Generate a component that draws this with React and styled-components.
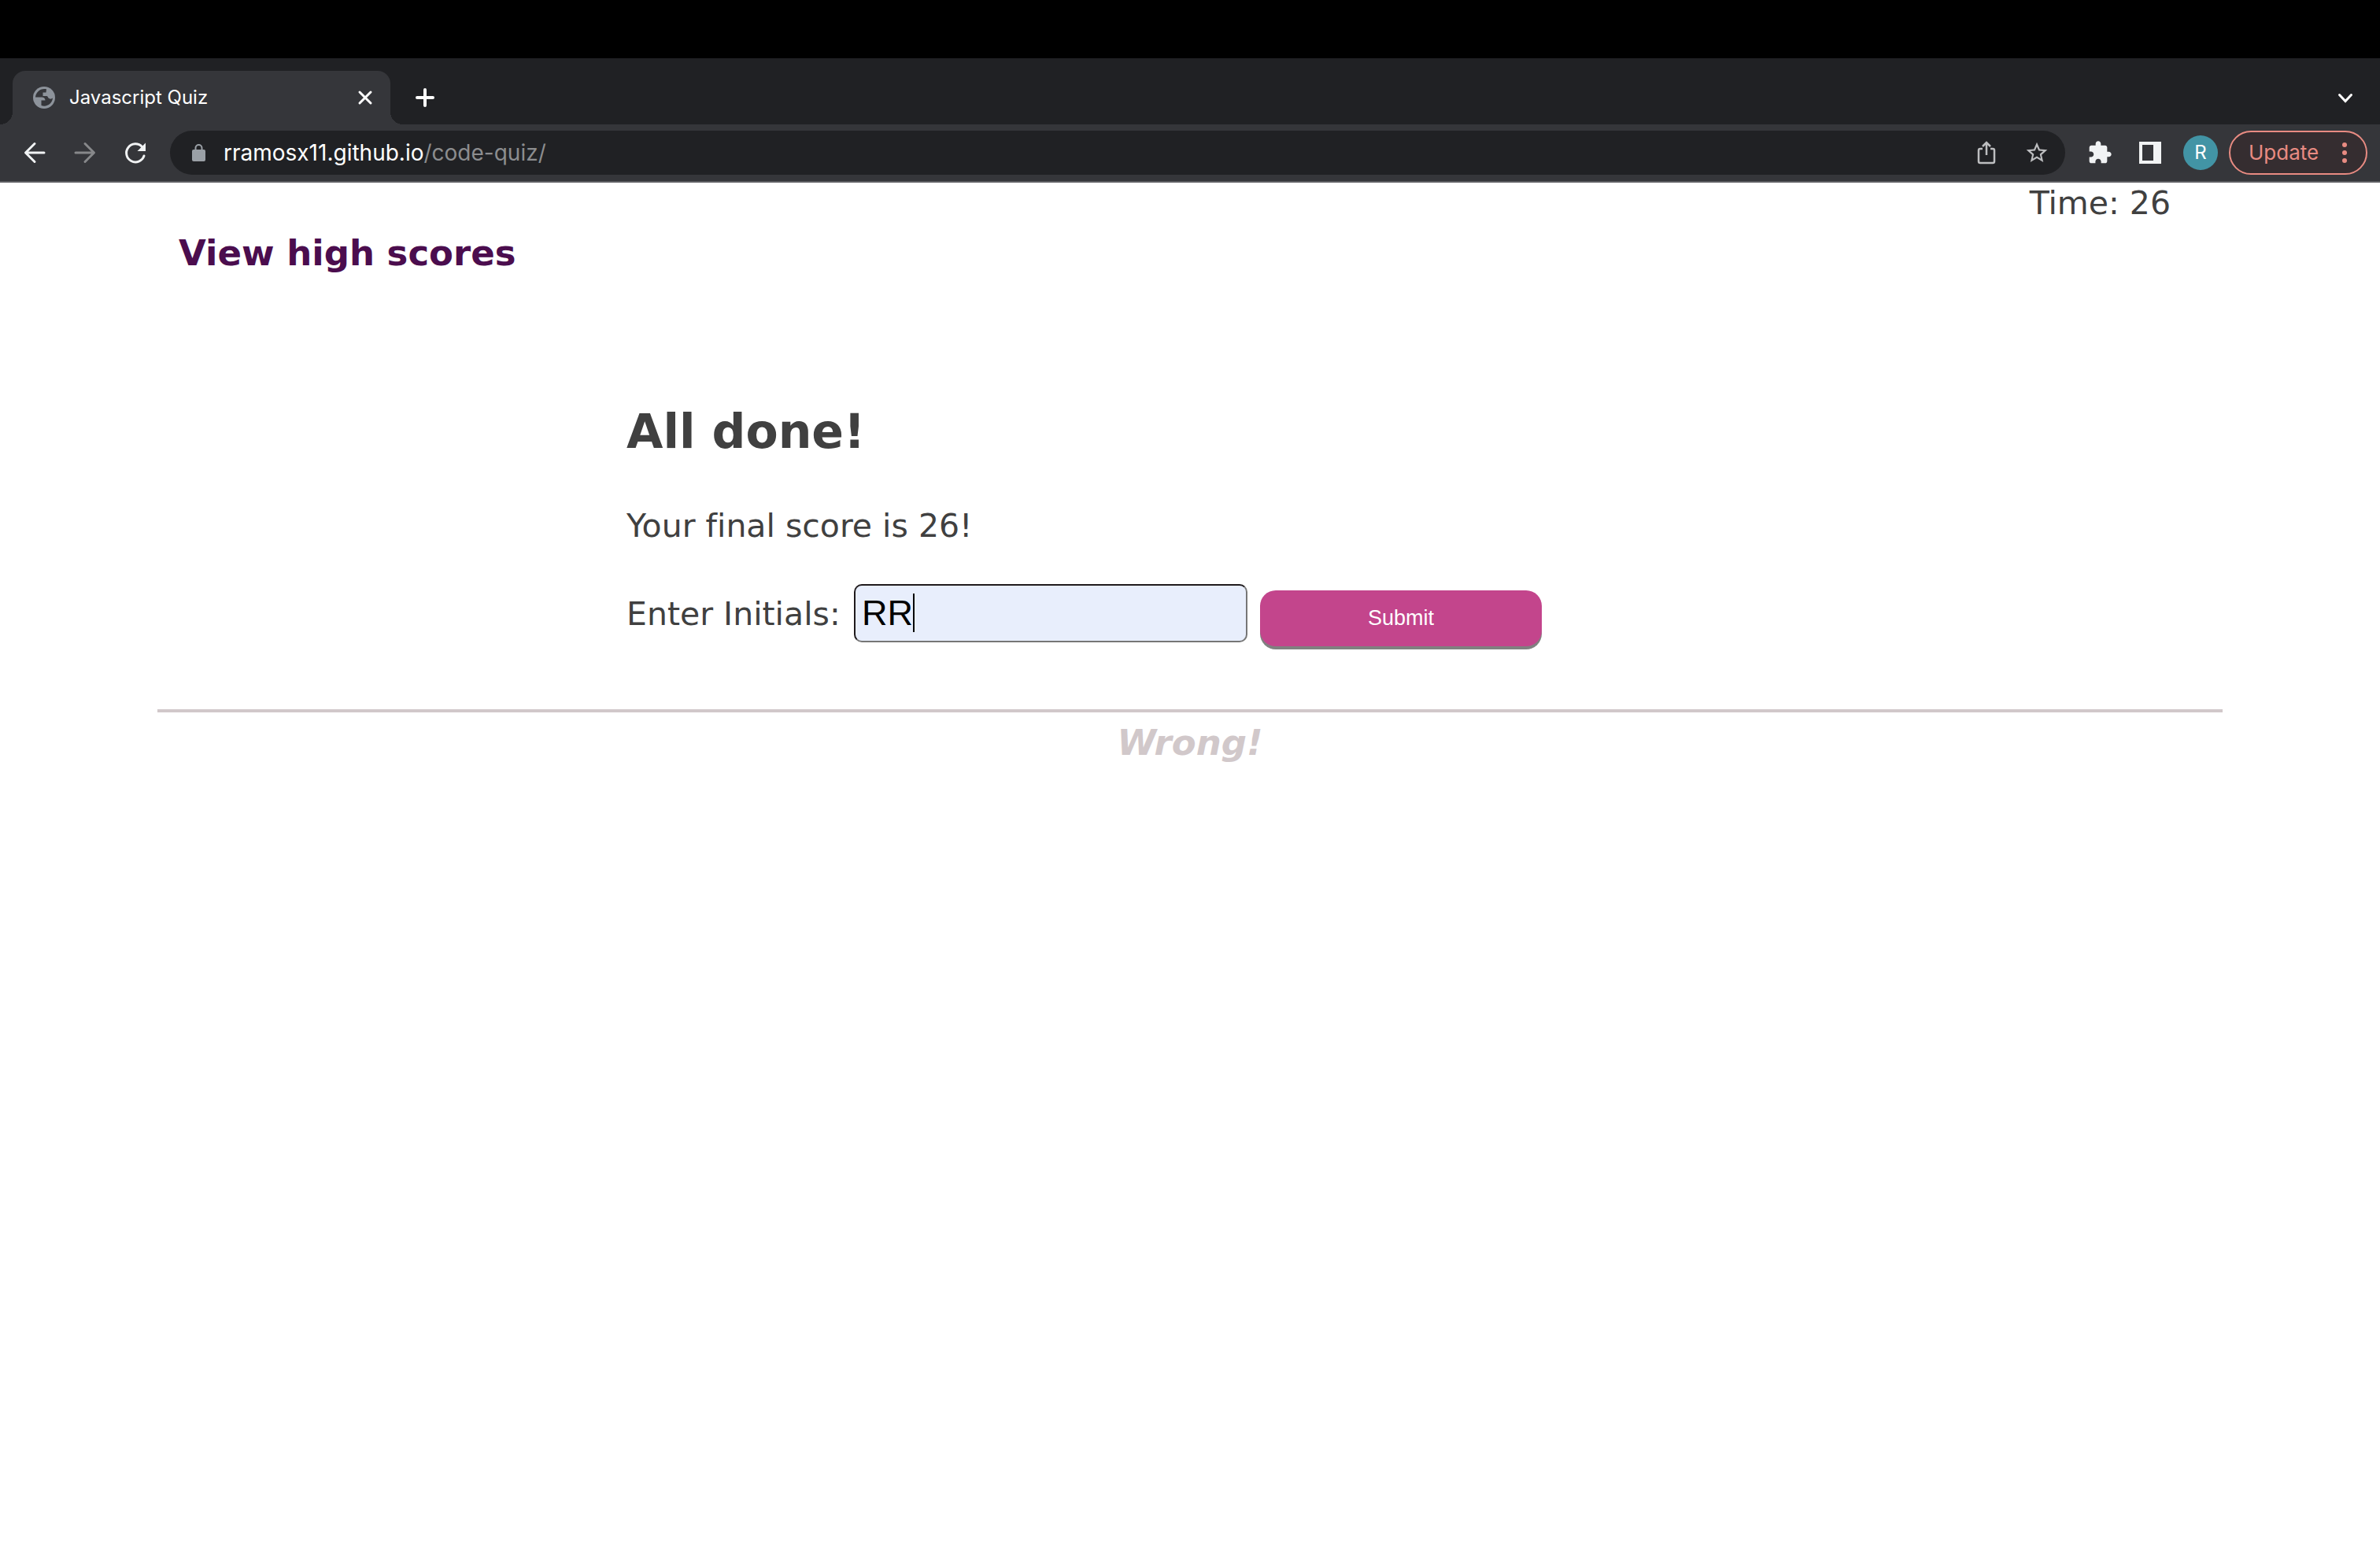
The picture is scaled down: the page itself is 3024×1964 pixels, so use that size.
import React, { useState } from "react";
import styled, { createGlobalStyle } from "styled-components";

const GlobalStyle = createGlobalStyle`
  *, *::before, *::after { box-sizing: border-box; }
  body {
    margin: 0;
    background: #fff;
    color: #404040;
    font-family: "DejaVu Sans", Verdana, sans-serif;
    font-size: 41px;
    line-height: 48px;
    font-variant-ligatures: none;
  }
  button, input { font: inherit; }
`;

const Chrome = styled.header`
  padding-top: 74px;
  background: #000;
  font-family: Inter, sans-serif;
  color: #fff;
`;

const TabStrip = styled.div`
  display: flex;
  align-items: flex-end;
  height: 84px;
  padding: 0 16px;
  background: #202124;
`;

const Tab = styled.div`
  position: relative;
  display: flex;
  align-items: center;
  gap: 18px;
  width: 480px;
  height: 68px;
  padding: 0 16px 0 26px;
  border-radius: 16px 16px 0 0;
  background: #35363a;

  &::before,
  &::after {
    content: "";
    position: absolute;
    bottom: 0;
    width: 16px;
    height: 16px;
  }
  &::before {
    left: -16px;
    background: radial-gradient(circle at 0 0, transparent 16px, #35363a 16px);
  }
  &::after {
    right: -16px;
    background: radial-gradient(circle at 100% 0, transparent 16px, #35363a 16px);
  }
`;

const TabTitle = styled.span`
  flex: 1;
  font-size: 24px;
  line-height: 32px;
`;

const IconButton = styled.button`
  display: flex;
  align-items: center;
  justify-content: center;
  flex: none;
  width: ${(p) => p.$size || 32}px;
  height: ${(p) => p.$size || 32}px;
  padding: 0;
  border: 0;
  background: none;
  color: ${(p) => p.$color || "#f1f3f4"};
`;

const StripButtons = styled.div`
  display: flex;
  flex: 1;
  align-items: center;
  justify-content: space-between;
  height: 68px;
  padding: 0 12px 0 28px;
`;

const Toolbar = styled.div`
  display: flex;
  align-items: center;
  height: 74px;
  padding: 0 16px 0 28px;
  border-bottom: 2px solid #5c5d61;
  background: #35363a;
`;

const NavButtons = styled.nav`
  display: flex;
  gap: 32px;
  margin-right: 28px;
`;

const AddressBar = styled.div`
  display: flex;
  flex: 1;
  align-items: center;
  height: 56px;
  padding: 0 20px 0 28px;
  border-radius: 28px;
  background: #202124;
`;

const Address = styled.div`
  flex: 1;
  margin-left: 23px;
  font-size: 28px;
  line-height: 36px;
`;

const AddressPath = styled.span`
  color: #8c8d8f;
`;

const AddressActions = styled.div`
  display: flex;
  gap: 32px;
`;

const ToolbarActions = styled.div`
  display: flex;
  align-items: center;
  gap: 32px;
  margin: 0 14px 0 28px;
`;

const Avatar = styled.button`
  width: 44px;
  height: 44px;
  margin-left: -6px;
  padding: 0;
  border: 0;
  border-radius: 50%;
  background: #4294a5;
  color: #fff;
  font-size: 24px;
  line-height: 44px;
`;

const UpdateButton = styled.button`
  display: flex;
  align-items: center;
  justify-content: space-between;
  width: 176px;
  height: 56px;
  padding: 0 23px;
  border: 2px solid #e88b82;
  border-radius: 28px;
  background: #352d30;
  color: #e88b82;
  font-size: 26px;
  line-height: 32px;
`;

const Page = styled.div`
  padding: 2px 200px 0;
`;

const Timer = styled.div`
  padding-right: 66px;
  text-align: right;
`;

const ScoresLink = styled.a`
  display: block;
  width: fit-content;
  margin: 12px 0 0 27px;
  color: #4b0d4e;
  font-size: 45px;
  font-weight: 700;
  line-height: 56px;
  text-decoration: none;
`;

const Result = styled.main`
  max-width: 1432px;
  margin: 162px auto 0;
`;

const Title = styled.h1`
  margin: 0 0 60px;
  font-size: 60px;
  line-height: 72px;
`;

const Score = styled.p`
  margin: 0 0 50px;
`;

const InitialsForm = styled.form`
  display: flex;
  align-items: flex-start;
  gap: 16px;
`;

const Label = styled.label`
  min-width: 273px;
  line-height: 76px;
`;

const Field = styled.div`
  position: relative;
  width: 500px;
`;

const Input = styled.input`
  display: block;
  width: 100%;
  height: 74px;
  padding: 0 8px;
  border: 2px solid #767676;
  border-top-color: #1f1a1c;
  border-left-color: #1f1a1c;
  border-radius: 10px;
  outline: 0;
  background: #e8eefc;
  color: #000;
  font-family: "Liberation Sans", Arial, sans-serif;
  font-size: 45px;
`;

const Caret = styled.span`
  position: absolute;
  top: 12px;
  left: 75px;
  width: 2px;
  height: 49px;
  background: #000;
`;

const Submit = styled.button`
  width: 358px;
  height: 71px;
  margin-top: 8px;
  padding: 0 0 2px;
  border: 0;
  border-radius: 20px;
  background: #c3458c;
  box-shadow: 0 4px #808080;
  color: #fff;
  font-family: "Liberation Sans", Arial, sans-serif;
  font-size: 27px;
  line-height: 32px;
`;

const Feedback = styled.p`
  margin: 80px 0 0;
  padding-top: 11px;
  border-top: 4px solid #d1c8ca;
  color: #d1c8ca;
  font-size: 45px;
  font-style: italic;
  font-weight: 700;
  line-height: 56px;
  text-align: center;
`;

function Icon({ size = 32, box = 24, stroke = 2, filled, children }) {
  return (
    <svg
      width={size}
      height={size}
      viewBox={`0 0 ${box} ${box}`}
      fill={filled ? "currentColor" : "none"}
      stroke={filled ? "none" : "currentColor"}
      strokeWidth={stroke}
      aria-hidden="true"
    >
      {children}
    </svg>
  );
}

function Globe() {
  return (
    <svg width="28" height="28" viewBox="0 0 28 28" aria-hidden="true">
      <circle cx="14" cy="14" r="14" fill="#8d939b" />
      <path
        d="M17 3.2C9.5 1.500 3.500 7 3 13.500h8c2.500 0 4.500 1.500 4.500 4H10.500v6.500c7 2.500 14-2.500 14.500-9.500-1.500 1.500-4 1.500-5.500 0-.8-1-.6-2-2-2.500H12.500V7.500h4z"
        fill="#35363a"
      />
    </svg>
  );
}

function BrowserChrome() {
  return (
    <Chrome>
      <TabStrip>
        <Tab>
          <Globe />
          <TabTitle>Javascript Quiz</TabTitle>
          <IconButton aria-label="Close tab" $color="#fff">
            <Icon box={32} stroke={3}>
              <path d="M9 9l14 14M23 9L9 23" strokeLinecap="round" />
            </Icon>
          </IconButton>
        </Tab>
        <StripButtons>
          <IconButton aria-label="New tab" $color="#fff">
            <Icon box={32} stroke={4}>
              <path d="M16 6v20M6 16h20" strokeLinecap="round" />
            </Icon>
          </IconButton>
          <IconButton aria-label="Search tabs" $color="#fff">
            <Icon box={32} stroke={3}>
              <path d="M8.500 12.500l7.500 8 7.500-8" strokeLinecap="round" />
            </Icon>
          </IconButton>
        </StripButtons>
      </TabStrip>
      <Toolbar>
        <NavButtons>
          <IconButton aria-label="Back">
            <Icon box={32} stroke={3}>
              <path d="M28 16H5M16 4.500L4.500 16 16 27.500" strokeLinecap="round" strokeLinejoin="round" />
            </Icon>
          </IconButton>
          <IconButton aria-label="Forward" $color="#87888a">
            <Icon box={32} stroke={3}>
              <path d="M4 16h23M16 4.500L27.500 16 16 27.500" strokeLinecap="round" strokeLinejoin="round" />
            </Icon>
          </IconButton>
          <IconButton aria-label="Reload">
            <Icon box={32} stroke={3}>
              <path d="M27 20a11.500 11.500 0 1 1-2.500-11.500" strokeLinecap="round" />
              <path d="M29 3.500v10.500H18.500z" fill="currentColor" stroke="none" />
            </Icon>
          </IconButton>
        </NavButtons>
        <AddressBar>
          <svg width="17" height="22" viewBox="0 0 17 22" aria-hidden="true">
            <rect x="0" y="7" width="17" height="15" rx="2" fill="#9aa0a6" />
            <path d="M4.500 8V5a4 4 0 0 1 8 0v3" fill="none" stroke="#9aa0a6" strokeWidth="2" />
          </svg>
          <Address>
            rramosx11.github.io<AddressPath>/code-quiz/</AddressPath>
          </Address>
          <AddressActions>
            <IconButton aria-label="Share" $color="#bdbec0">
              <Icon box={32} stroke={2.5}>
                <path d="M11 11H8a2 2 0 0 0-2 2v14a2 2 0 0 0 2 2h16a2 2 0 0 0 2-2V13a2 2 0 0 0-2-2h-3M16 19V3.500M11 8l5-5 5 5" />
              </Icon>
            </IconButton>
            <IconButton aria-label="Bookmark" $color="#bdbec0">
              <Icon size={34} filled>
                <path
                  fillRule="evenodd"
                  d="M22 9.240l-7.190-.62L12 2 9.190 8.630 2 9.240l5.460 4.730L5.820 21 12 17.270 18.180 21l-1.630-7.030L22 9.240zM12 15.400l-3.760 2.270 1-4.280-3.320-2.880 4.380-.38L12 6.100l1.710 4.040 4.380.38-3.320 2.880 1 4.280L12 15.400z"
                />
              </Icon>
            </IconButton>
          </AddressActions>
        </AddressBar>
        <ToolbarActions>
          <IconButton aria-label="Extensions">
            <Icon size={32} filled>
              <path d="M20.500 11H19V7c0-1.100-.9-2-2-2h-4V3.500C13 2.120 11.880 1 10.500 1S8 2.120 8 3.500V5H4c-1.100 0-1.990.9-1.990 2v3.800H3.500c1.490 0 2.700 1.210 2.700 2.700s-1.210 2.700-2.700 2.700H2V20c0 1.100.9 2 2 2h3.800v-1.500c0-1.490 1.210-2.700 2.700-2.700 1.490 0 2.700 1.210 2.700 2.700V22H17c1.100 0 2-.9 2-2v-4h1.500c1.380 0 2.500-1.120 2.500-2.500S21.880 11 20.500 11z" />
            </Icon>
          </IconButton>
          <IconButton aria-label="Side panel">
            <Icon box={32} filled>
              <path d="M2 2h28v28H2zM6 6v20h14V6z" fillRule="evenodd" />
            </Icon>
          </IconButton>
          <Avatar aria-label="Profile">R</Avatar>
        </ToolbarActions>
        <UpdateButton>
          Update
          <svg width="8" height="28" viewBox="0 0 8 28" fill="currentColor" aria-hidden="true">
            <circle cx="4" cy="4" r="3" />
            <circle cx="4" cy="14" r="3" />
            <circle cx="4" cy="24" r="3" />
          </svg>
        </UpdateButton>
      </Toolbar>
    </Chrome>
  );
}

export default function App() {
  const [initials, setInitials] = useState("RR");
  return (
    <>
      <GlobalStyle />
      <BrowserChrome />
      <Page>
        <Timer>Time: 26</Timer>
        <ScoresLink href="#scores">View high scores</ScoresLink>
        <Result>
          <Title>All done!</Title>
          <Score>Your final score is 26!</Score>
          <InitialsForm onSubmit={(e) => e.preventDefault()}>
            <Label htmlFor="initials">Enter Initials:</Label>
            <Field>
              <Input id="initials" value={initials} onChange={(e) => setInitials(e.target.value)} />
              {initials === "RR" && <Caret />}
            </Field>
            <Submit>Submit</Submit>
          </InitialsForm>
        </Result>
        <Feedback>Wrong!</Feedback>
      </Page>
    </>
  );
}
